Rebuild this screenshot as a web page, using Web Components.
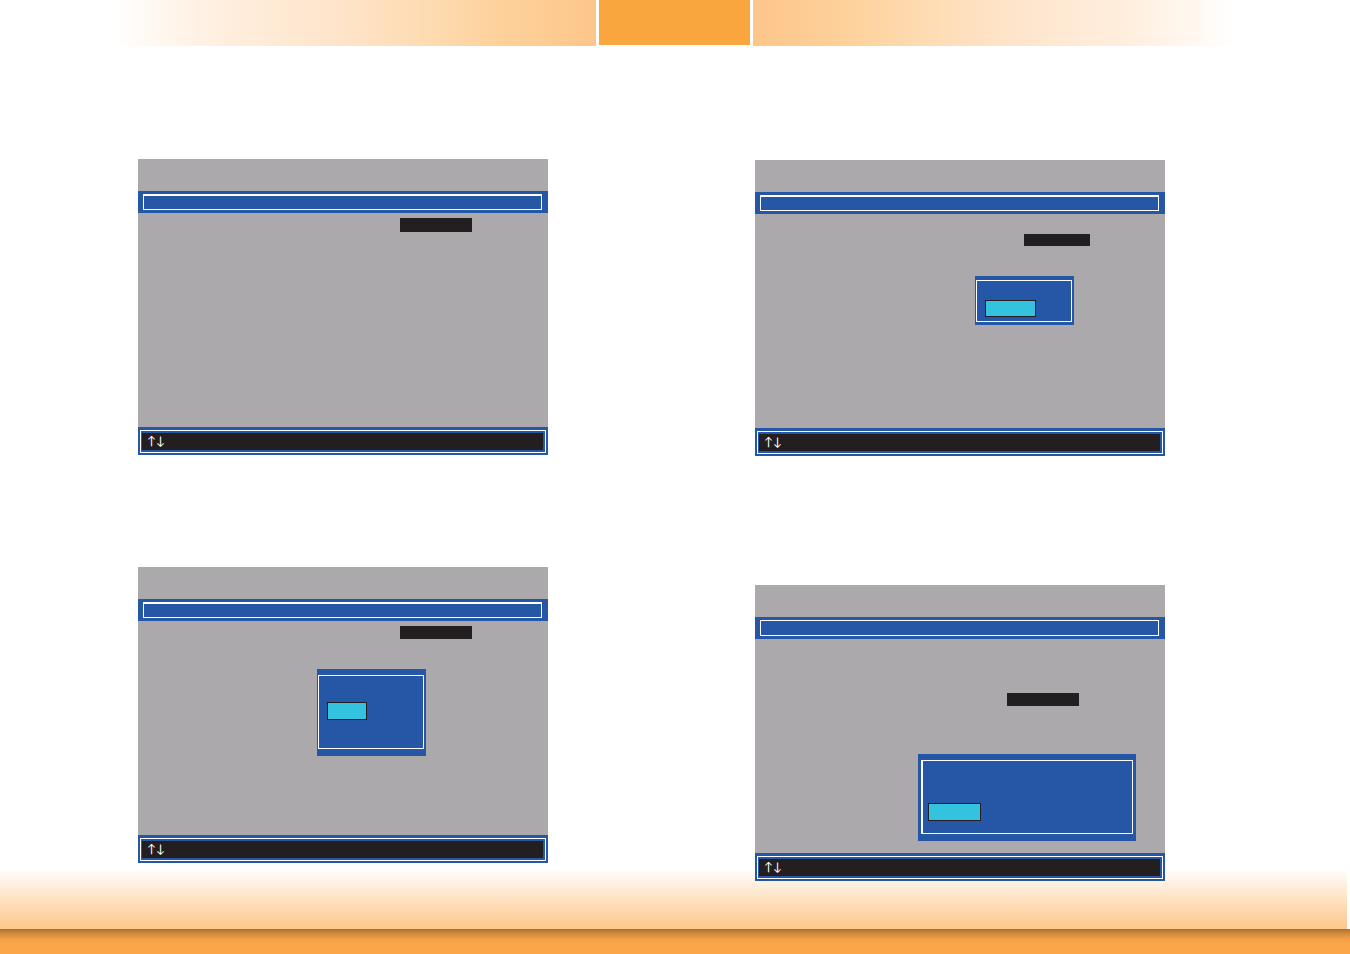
<!DOCTYPE html>
<html lang="en">
<head>
  <meta charset="UTF-8">
  <meta name="viewport" content="width=device-width, initial-scale=1.0">
  <title>BIOS Setup</title>
  <style>
    :root {
      --grey: #aba9ab;
      --blue: #2656a6;
      --black: #231f20;
      --cyan: #34c3de;
      --orange: #f9a63f;
    }
    body {
      margin: 0;
      background: #fff;
      font-family: Lato, sans-serif;
    }
  </style>
</head>
<body>
  <manual-page>
    <manual-column slot="left" style="--top: 113px; --gap: 112px">
      <setup-screen>
        <value-highlight style="--top: 5px; --right: 76px"></value-highlight>
      </setup-screen>
      <setup-screen>
        <value-highlight style="--top: 5px; --right: 76px; --height: 13px"></value-highlight>
        <option-popup style="--top: 48px; --right: 122px; --width: 109px; --height: 87px; --option-width: 40px"></option-popup>
      </setup-screen>
    </manual-column>
    <manual-column slot="right" style="--top: 114px; --gap: 129px">
      <setup-screen>
        <value-highlight style="--top: 20px; --right: 75px; --width: 66px; --height: 12px"></value-highlight>
        <option-popup style="--top: 62px; --right: 91px; --width: 99px; --height: 49px; --inset: 4px 2px 3px 1px; --option-top: 19px; --option-width: 51px; --option-height: 17px"></option-popup>
      </setup-screen>
      <setup-screen style="--frame-top: 1px">
        <value-highlight style="--top: 54px; --right: 86px; --height: 13px"></value-highlight>
        <option-popup style="--top: 115px; --right: 29px; --width: 218px; --height: 87px; --inset: 6px 3px 7px 3px; --frame-left: 2px; --option-top: 42px; --option-left: 5px; --option-width: 53px"></option-popup>
      </setup-screen>
    </manual-column>
  </manual-page>

  <script>
    class PageBanner extends HTMLElement {
      connectedCallback() {
        this.attachShadow({ mode: 'open' });
        this.shadowRoot.innerHTML = `
          <style>
            :host {
              display: flex;
              gap: 3px;
              height: 46px;
              padding-right: 1px;
            }
            .fade {
              flex: 1;
              background: linear-gradient(var(--side), #fdc68a 0%, #fdd29d 17%, #fedbb1 28%, #fee6ce 46%, #ffeedd 62%, #fff6ed 72%, #fff 81%);
            }
            .left {
              --side: to left;
            }
            .right {
              --side: to right;
            }
            .tab {
              width: 151px;
              height: 45px;
              background: var(--orange);
            }
          </style>
          <div class="fade left"></div>
          <div class="tab"></div>
          <div class="fade right"></div>
        `;
      }
    }

    class ManualPage extends HTMLElement {
      connectedCallback() {
        this.attachShadow({ mode: 'open' });
        this.shadowRoot.innerHTML = `
          <style>
            :host {
              display: flex;
              flex-direction: column;
              min-height: 100vh;
            }
            main {
              flex: 1;
              display: grid;
              grid-template-columns: 1fr 1fr;
              column-gap: 207px;
              padding: 0 185px 47px 138px;
              box-sizing: border-box;
              background: linear-gradient(#fff, #fff0e0 25%, #fedfbc 56%, #fdc78b) left bottom / calc(100% - 3px) 60px no-repeat;
            }
            footer {
              height: 25px;
              background: linear-gradient(#a97233, #d48c3d 5px, #f3a046 10px, #faa649 14px);
            }
          </style>
          <page-banner></page-banner>
          <main>
            <slot name="left"></slot>
            <slot name="right"></slot>
          </main>
          <footer></footer>
        `;
      }
    }

    class ManualColumn extends HTMLElement {
      connectedCallback() {
        this.attachShadow({ mode: 'open' });
        this.shadowRoot.innerHTML = `
          <style>
            :host {
              display: flex;
              flex-direction: column;
            }
            div {
              display: flex;
              flex-direction: column;
              gap: var(--gap);
              padding-top: var(--top);
            }
          </style>
          <div><slot></slot></div>
        `;
      }
    }

    class SetupScreen extends HTMLElement {
      connectedCallback() {
        this.attachShadow({ mode: 'open' });
        this.shadowRoot.innerHTML = `
          <style>
            :host {
              display: flex;
              flex-direction: column;
              background: var(--grey);
            }
            .heading {
              height: 32px;
            }
            .title {
              height: 22px;
              padding: 3px 6px 3px 5px;
              box-sizing: border-box;
              background: var(--blue);
            }
            .title div {
              height: 100%;
              box-sizing: border-box;
              border: 1px solid #fff;
              border-top-width: var(--frame-top, 2px);
            }
            .content {
              position: relative;
              min-height: 214px;
            }
            .keys {
              padding: 3px 2px 2px;
              background: var(--blue);
            }
            .frame {
              padding: 2px 2px 2px 1px;
              border: 1px solid #fff;
            }
            .legend {
              height: 17px;
              padding-left: 5px;
              background: var(--black);
              color: #fff;
              font-size: 12px;
              line-height: 16px;
            }
          </style>
          <div class="heading"></div>
          <div class="title"><div></div></div>
          <div class="content"><slot></slot></div>
          <div class="keys">
            <div class="frame"><div class="legend">↑↓</div></div>
          </div>
        `;
      }
    }

    class ValueHighlight extends HTMLElement {
      connectedCallback() {
        this.attachShadow({ mode: 'open' });
        this.shadowRoot.innerHTML = `
          <style>
            :host {
              position: absolute;
              top: var(--top);
              right: var(--right);
              width: var(--width, 72px);
              height: var(--height, 14px);
              background: var(--black);
            }
          </style>
        `;
      }
    }

    class OptionPopup extends HTMLElement {
      connectedCallback() {
        this.attachShadow({ mode: 'open' });
        this.shadowRoot.innerHTML = `
          <style>
            :host {
              position: absolute;
              top: var(--top);
              right: var(--right);
              display: flex;
              width: var(--width);
              height: var(--height);
              padding: var(--inset, 6px 2px 7px 1px);
              box-sizing: border-box;
              background: var(--blue);
            }
            .frame {
              flex: 1;
              padding: var(--option-top, 26px) 0 0 var(--option-left, 8px);
              border: 1px solid #fff;
              border-left-width: var(--frame-left, 1px);
            }
            button {
              display: block;
              width: var(--option-width);
              height: var(--option-height, 18px);
              padding: 0;
              border: 1px solid var(--black);
              border-radius: 0;
              background: var(--cyan);
            }
          </style>
          <div class="frame"><button type="button" aria-label="Selected option"></button></div>
        `;
      }
    }

    customElements.define('page-banner', PageBanner);
    customElements.define('manual-page', ManualPage);
    customElements.define('manual-column', ManualColumn);
    customElements.define('setup-screen', SetupScreen);
    customElements.define('value-highlight', ValueHighlight);
    customElements.define('option-popup', OptionPopup);
  </script>
</body>
</html>
